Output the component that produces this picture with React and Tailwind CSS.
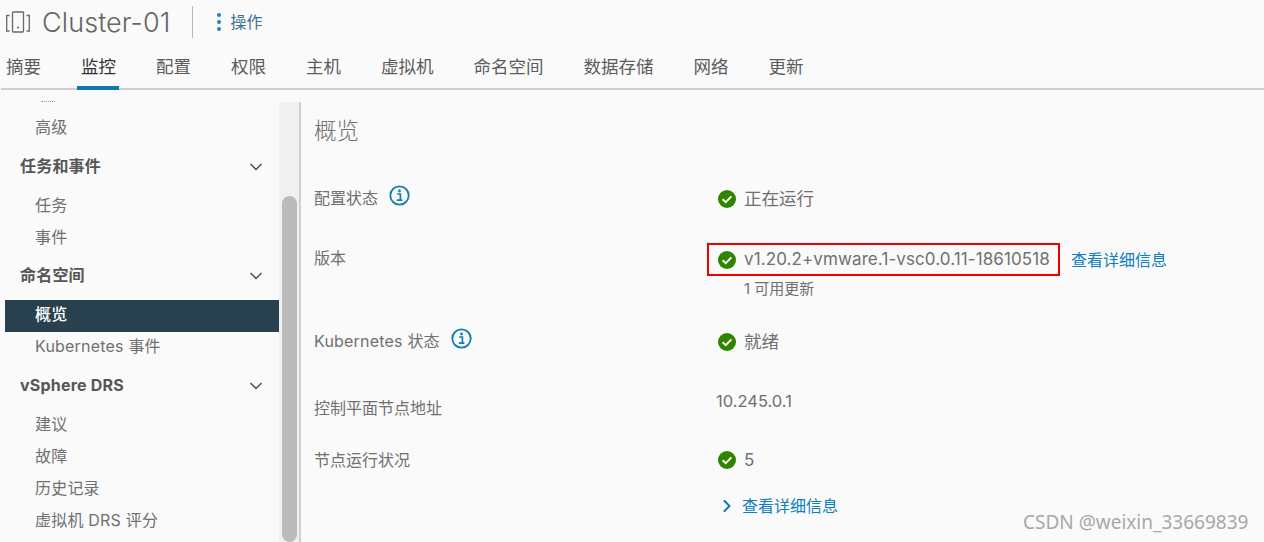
import React from 'react';
import { ChevronDown, ChevronRight } from 'lucide-react';

const tabs = ['摘要', '监控', '配置', '权限', '主机', '虚拟机', '命名空间', '数据存储', '网络', '更新'];

function OkIcon() {
  return (
    <svg width="18" height="18" viewBox="0 0 18 18" className="shrink-0">
      <circle cx="9" cy="9" r="9" fill="#2f8400" />
      <path d="M4.6 9.2 L7.8 12.2 L13.4 6.4" fill="none" stroke="#fff" strokeWidth="2" />
    </svg>
  );
}

function InfoIcon() {
  return (
    <svg width="21" height="21" viewBox="0 0 21 21" className="shrink-0 -mt-[2px]">
      <circle cx="10.5" cy="10.5" r="9.2" fill="none" stroke="#0f7fae" strokeWidth="1.8" />
      <circle cx="10.5" cy="6" r="1.4" fill="#0f7fae" />
      <path d="M8.2 9h3.2v6M7.8 15.2h5.6" fill="none" stroke="#0f7fae" strokeWidth="1.7" />
    </svg>
  );
}

function NavItem({ label, active }) {
  return (
    <div className={'h-8 pl-[30px] flex items-center text-[16px] tracking-[0.2px] ' + (active ? 'bg-[#29404f] text-white font-medium pb-[4px] -mb-[2px] relative' : 'text-[#707070]')}>
      {label}
    </div>
  );
}

function NavHeader({ label, height }) {
  return (
    <div className={'flex items-center justify-between pl-[15px] pr-[13px] text-[16px] tracking-[0.2px] font-bold text-[#565656] ' + height}>
      <span>{label}</span>
      <ChevronDown size={20} strokeWidth={2} className="text-[#565656] mt-[1px]" />
    </div>
  );
}

export default function App() {
  return (
    <div className="relative h-[542px] w-[1264px] overflow-hidden bg-[#fafafa] font-['Inter','Noto_Sans_CJK_SC',sans-serif] text-[#707070]">
      {/* title bar */}
      <div className="h-[44px] flex items-center pl-[6px]">
        <svg width="24" height="24" viewBox="0 0 24 24" fill="none" stroke="#6a6a6a" strokeWidth="1.3" className="shrink-0">
          <path d="M3.5 5.5H.7v15.5h2.8M20.5 5.5h2.8v15.5h-2.8" />
          <rect x="6.5" y="2" width="11" height="20" rx="0.8" />
          <circle cx="12" cy="17.5" r="1.1" fill="#6a6a6a" stroke="none" />
        </svg>
        <span className="ml-[12px] text-[27px] font-light text-[#666] leading-none tracking-[0.1px]">Cluster-01</span>
        <div className="ml-[22px] h-[32px] w-px bg-[#b8b8b8]" />
        <div className="ml-[24px] flex flex-col gap-[3px]">
          <span className="size-[4px] rounded-full bg-[#1a84bc]" />
          <span className="size-[4px] rounded-full bg-[#1a84bc]" />
          <span className="size-[4px] rounded-full bg-[#1a84bc]" />
        </div>
        <span className="ml-[9px] text-[16px] text-[#3d6f92]">操作</span>
      </div>

      {/* tabs */}
      <div className="h-[46px] ml-[1px] flex items-stretch gap-[40px] border-b-2 border-[#d0d0d0] pl-[5px] pt-[5px] text-[17.5px] text-[#5c5c5c]">
        {tabs.map((t) => (
          <div key={t} className={'relative flex items-center pb-[2px] ' + (t === '监控' ? 'text-[#333]' : '')}>
            {t}
            {t === '监控' && <span className="absolute -left-[4px] -right-[3px] -bottom-[2px] h-[4px] bg-[#0f78b4]" />}
          </div>
        ))}
      </div>

      <div className="flex h-[452px]">
        {/* sidebar */}
        <div className="w-[279px] pl-[5px] pt-[11px] shrink-0 overflow-hidden">
          <div className="h-[1px] ml-[36px] mb-[9px] w-[14px] border-t border-dotted border-[#999]" />
          <NavItem label="高级" />
          <NavHeader label="任务和事件" height="h-[46px]" />
          <NavItem label="任务" />
          <NavItem label="事件" />
          <NavHeader label="命名空间" height="h-[47px] pb-[3px]" />
          <NavItem label="概览" active />
          <NavItem label="Kubernetes 事件" />
          <NavHeader label="vSphere DRS" height="h-[46px]" />
          <NavItem label="建议" />
          <NavItem label="故障" />
          <NavItem label="历史记录" />
          <NavItem label="虚拟机 DRS 评分" />
        </div>

        {/* scrollbar */}
        <div className="w-[22px] shrink-0 mt-[12px] bg-[#f0f0f0] border-r-2 border-[#d0d0d0] pt-[94px] pl-[3px] pr-[2px]">
          <div className="h-[346px] rounded-[8px] bg-[#bbbbbb]" />
        </div>

        {/* main panel */}
        <div className="flex-1 pl-[13px] text-[16px]">
          <div className="pt-[25px] text-[22.5px] leading-[32px] font-light text-[#707070]">概览</div>

          <div className="mt-[40px] grid grid-cols-[402px_1fr]">
            <div className="h-[60px] flex items-start gap-[11px]">
              <span className="leading-[24px] -mt-[1px]">配置状态</span>
              <InfoIcon />
            </div>
            <div className="h-[60px] flex items-start gap-[8px] pl-[2px] pt-[3px]">
              <OkIcon />
              <span className="text-[17.5px] leading-[18px]">正在运行</span>
            </div>

            <div className="h-[83px] leading-[24px] -mt-[1px]">版本</div>
            <div className="h-[83px]">
              <div className="flex items-center -mt-[4px]">
                <div className="-ml-[9px] h-[33px] w-[353px] border-2 border-[#f00000] flex items-center gap-[8px] pl-[9px]">
                  <OkIcon />
                  <span className="text-[17px] tracking-[0.1px] whitespace-nowrap">v1.20.2+vmware.1-vsc0.0.11-18610518</span>
                </div>
                <a className="ml-[11px] text-[16px] text-[#0f7fbf]">查看详细信息</a>
              </div>
              <div className="mt-[3px] pl-[28px] text-[15px] leading-[20px]">1 可用更新</div>
            </div>

            <div className="h-[59px] flex items-start gap-[11px]">
              <span className="leading-[24px] -mt-[1px] tracking-[0.2px]">Kubernetes 状态</span>
              <InfoIcon />
            </div>
            <div className="h-[59px] flex items-start gap-[8px] pl-[2px] pt-[3px]">
              <OkIcon />
              <span className="text-[17.5px] leading-[18px]">就绪</span>
            </div>

            <div className="h-[59px] pt-[7px] leading-[24px]">控制平面节点地址</div>
            <div className="h-[59px] text-[16.5px] leading-[18px] pt-[3px]">10.245.0.1</div>

            <div className="h-[46px] leading-[24px]">节点运行状况</div>
            <div className="h-[46px] flex items-start gap-[8px] pl-[2px] pt-[3px]">
              <OkIcon />
              <span className="text-[17px] leading-[18px]">5</span>
            </div>

            <div />
            <div className="flex items-center gap-[5px] pl-[1px] text-[16px] text-[#0f7fbf]">
              <ChevronRight size={20} strokeWidth={2.4} className="text-[#0f78b4]" />
              <span>查看详细信息</span>
            </div>
          </div>
        </div>
      </div>

      {/* watermark */}
      <div className="absolute left-[1023px] top-[510px] text-[19px] leading-[24px] text-[#a8a8a8] font-['Noto_Sans',sans-serif] whitespace-nowrap">
        CSDN @weixin_33669839
      </div>
    </div>
  );
}
